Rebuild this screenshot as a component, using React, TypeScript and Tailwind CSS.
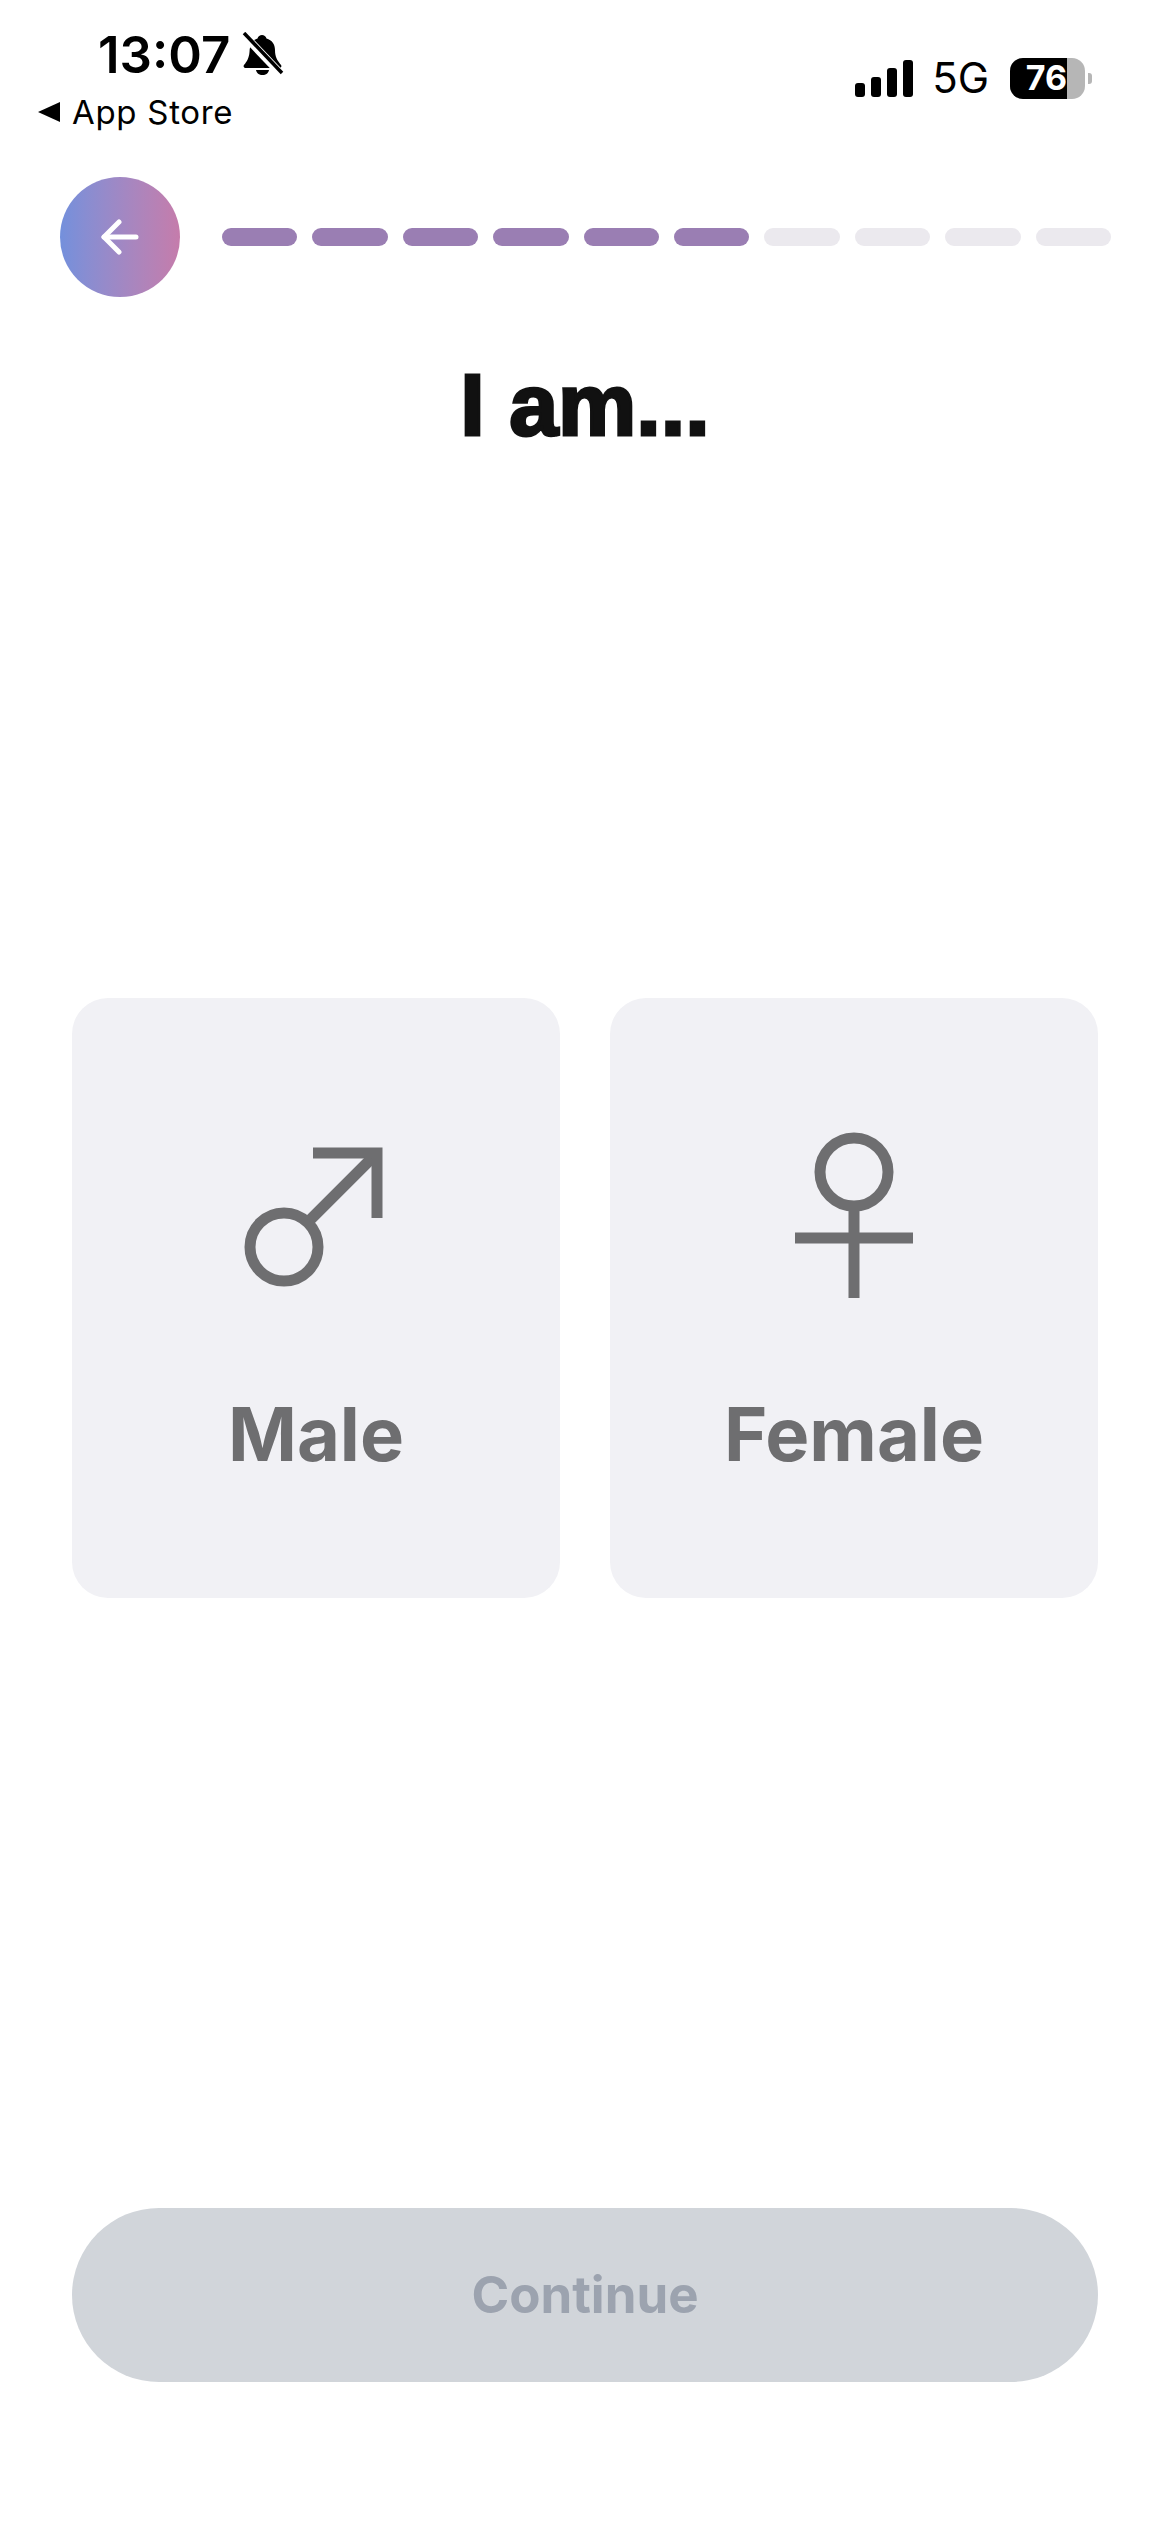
// Onboarding step: gender picker
function BellSlash() {
  return (
    <svg width="42" height="44" viewBox="0 0 42 44" className="ml-[12px]">
      <path d="M20 3c2 0 4 1.500 4.500 3.500C30 8 33 12.500 33 18c0 7 2 10 6 15 1 1.500 0 3-2 3H4c-2 0-3-1.500-2-3 3-3.500 5-7 5.500-13C8 12 11 8 15.500 6.500 16 4.500 18 3 20 3z" fill="#000" />
      <path d="M14 38h13c-.5 3-3 5-6.500 5S14.500 41 14 38z" fill="#000" />
      <path d="M1 2l38 40" stroke="#fff" strokeWidth="8" />
      <path d="M2 1l38 40" stroke="#000" strokeWidth="3.500" />
    </svg>
  )
}

function Signal() {
  return (
    <div className="flex items-end gap-[6px]">
      <div className="w-[10px] h-[14px] rounded-[3px] bg-black" />
      <div className="w-[10px] h-[20px] rounded-[3px] bg-black" />
      <div className="w-[10px] h-[29px] rounded-[3px] bg-black" />
      <div className="w-[10px] h-[37px] rounded-[3px] bg-black" />
    </div>
  )
}

function Battery() {
  return (
    <div className="flex items-center">
      <div className="w-[75px] h-[41px] rounded-[13px] bg-[#b6b6b6] overflow-hidden flex">
        <div className="w-[57px] h-full bg-black flex items-center justify-end">
          <span className="text-white text-[34px] leading-none font-bold">76</span>
        </div>
      </div>
      <div className="ml-[3px] w-[4px] h-[11px] rounded-r-[3px] bg-[#b6b6b6]" />
    </div>
  )
}

function StatusBar() {
  return (
    <div className="h-[177px] flex items-start justify-between">
      <div className="pl-[38px] pt-[26px]">
        <div className="flex items-center pl-[60px] h-[56px]">
          <span className="text-[51px] leading-none font-semibold text-black">13:07</span>
          <BellSlash />
        </div>
        <div className="flex items-center h-[40px] mt-[10px]">
          <svg width="22" height="20" viewBox="0 0 22 20">
            <path d="M0 10L22 0v20z" fill="#000" />
          </svg>
          <span className="ml-[12px] text-[33px] leading-none font-normal text-black tracking-[0.7px]">App Store</span>
        </div>
      </div>
      <div className="flex items-center pt-[57px] pr-[78px]">
        <Signal />
        <span className="ml-[19px] text-[42px] leading-none text-black">5G</span>
        <div className="ml-[21px]">
          <Battery />
        </div>
      </div>
    </div>
  )
}

function Progress({ done, total }: { done: number; total: number }) {
  return (
    <div className="flex flex-1 gap-[15px]">
      {Array.from({ length: total }).map((_, i) => (
        <div key={i} className={i < done ? "flex-1 h-[18px] rounded-full bg-[#9a7eb3]" : "flex-1 h-[18px] rounded-full bg-[#ebe9ee]"} />
      ))}
    </div>
  )
}

function MaleIcon() {
  return (
    <svg width="140" height="140" viewBox="0 0 140 140" fill="none" stroke="#6e6e70" strokeWidth="11">
      <circle cx="40" cy="100" r="34" />
      <path d="M65 74L134 5" />
      <path d="M69 6H133V71" />
    </svg>
  )
}

function FemaleIcon() {
  return (
    <svg width="120" height="166" viewBox="0 0 120 166" fill="none" stroke="#6e6e70" strokeWidth="11">
      <circle cx="60" cy="40" r="34" />
      <path d="M60 74V166" />
      <path d="M1 106H119" />
    </svg>
  )
}

function GenderCard({ label, icon, iconClass }: { label: string; icon: React.ReactNode; iconClass: string }) {
  return (
    <div className="w-[488px] h-[600px] rounded-[36px] bg-[#f1f1f5] flex flex-col items-center">
      <div className={iconClass}>{icon}</div>
      <span className="text-[74px] leading-none font-bold text-[#6e6e70]">{label}</span>
    </div>
  )
}

export default function App() {
  return (
    <div className="w-[1170px] h-[2532px] bg-white flex flex-col overflow-hidden font-['Inter',sans-serif]">
      <StatusBar />

      <div className="flex items-center pl-[60px] pr-[59px] gap-[42px]">
        <button className="w-[120px] h-[120px] shrink-0 rounded-full bg-gradient-to-r from-[#7390dc] to-[#c57cab] flex items-center justify-center">
          <svg width="38" height="36" viewBox="0 0 38 36" fill="none" stroke="#fff" strokeWidth="5" strokeLinecap="round" strokeLinejoin="round">
            <path d="M35 18H3" />
            <path d="M18 3L3 18l15 15" />
          </svg>
        </button>
        <Progress done={6} total={10} />
      </div>

      <h1 className="mt-[64px] text-center text-[88px] leading-[88px] font-bold text-[#111] font-['Liberation_Sans',sans-serif] [-webkit-text-stroke:3px_#111]">I am...</h1>

      <div className="mt-[549px] px-[72px] flex justify-between">
        <GenderCard label="Male" icon={<MaleIcon />} iconClass="mt-[149px] mb-[110px] mr-[4px]" />
        <GenderCard label="Female" icon={<FemaleIcon />} iconClass="mt-[134px] mb-[99px]" />
      </div>

      <button className="mt-[610px] mx-[72px] h-[174px] rounded-full bg-[#d1d5da] text-[51px] font-bold text-[#9ca3af]">Continue</button>
    </div>
  )
}
